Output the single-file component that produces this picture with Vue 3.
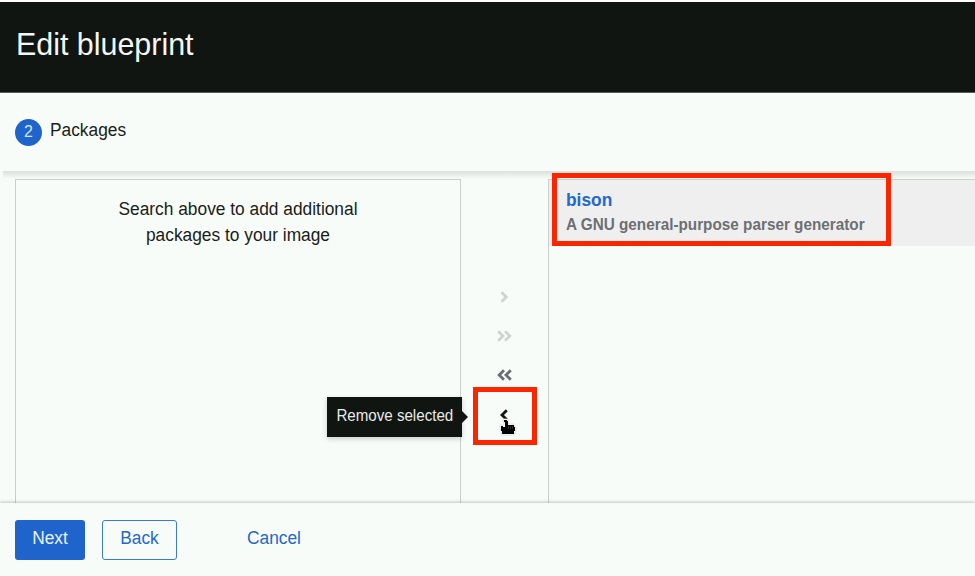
<script setup>
const idle = [
  { label: 'Add selected', paths: ['M2.5 1.3 L7.3 6 L2.5 10.7'], muted: true, w: 10 },
  { label: 'Add all', paths: ['M1.2 1.3 L6 6 L1.2 10.7', 'M8 1.3 L12.8 6 L8 10.7'], muted: true, w: 15 },
  { label: 'Remove all', paths: ['M7 1.3 L2.2 6 L7 10.7', 'M13.8 1.3 L9 6 L13.8 10.7'], muted: false, w: 15 },
]
</script>

<template>
  <div class="wizard">
    <header class="head"><h1 class="t from-left">Edit blueprint</h1></header>
    <nav class="step"><span class="num">2</span><span class="step-name t from-left">Packages</span></nav>
    <main class="body">
      <section class="pane available">
        <p class="t">Search above to add additional<br />packages to your image</p>
      </section>
      <div class="controls">
        <button v-for="c in idle" :key="c.label" class="ctl" :class="{ muted: c.muted }" :aria-label="c.label">
          <svg :width="c.w" height="12" :viewBox="`0 0 ${c.w} 12`"><path v-for="p in c.paths" :key="p" :d="p" /></svg>
        </button>
        <button class="ctl active" aria-label="Remove selected">
          <svg class="arrow" width="10" height="12" viewBox="0 0 10 12"><path d="M7.8 1.3 L3 6 L7.8 10.7" /></svg>
          <svg class="cursor" width="19" height="20" viewBox="0 0 19 20">
            <path class="halo" d="M5 2h5v5h6v3h2v5h-1v3H3v-5H2V8h4V5H5z" />
            <path class="hand" d="M6 3h3v1h1v4h6v2h1v4h-1v3H4v-3H3V9h2v1h2V5H6z" />
            <path class="detail" d="M10.5 9.5v2M12.5 9.5v2M14.5 9.5v2" />
          </svg>
        </button>
        <div class="tooltip"><div class="t">Remove selected</div></div>
      </div>
      <section class="pane chosen">
        <div class="item">
          <div class="item-name t from-left">bison</div>
          <div class="item-desc t from-left">A GNU general-purpose parser generator</div>
        </div>
      </section>
    </main>
    <footer class="foot">
      <button class="btn primary"><div class="t">Next</div></button>
      <button class="btn outline"><div class="t">Back</div></button>
      <button class="btn link"><div class="t">Cancel</div></button>
    </footer>
  </div>
</template>

<style>
body { margin: 0; overflow: hidden; background: #f8fcf9; }
</style>

<style scoped>
*, *::after { box-sizing: border-box; }
.wizard {
  display: flex;
  flex-direction: column;
  width: 975px;
  height: 576px;
  overflow: hidden;
  background: #f8fcf9;
  color: #1b1d1b;
  font-family: "Liberation Sans", Arial, sans-serif;
  font-size: 18.35px;
}
/* slightly condensed lettering */
.t { transform: scaleX(.945); white-space: nowrap; }
.from-left { transform-origin: left; }
button { font: inherit; padding: 0; margin: 0; border: 0; background: none; }
.head {
  flex: none;
  height: 93px;
  padding: 24px 15.5px 0;
  border-top: 2px solid #fff;
  border-bottom: 1px solid #59605b;
  background: #101511;
}
h1 { margin: 0; font-size: 32.2px; font-weight: 400; line-height: 36px; color: #f4f7f5; }
.step {
  flex: none;
  display: flex;
  align-items: center;
  height: 78px;
  padding: 0 15px;
}
.num {
  width: 27px;
  height: 27px;
  margin-right: 8px;
  border-radius: 50%;
  background: #1f64cb;
  color: #d3e6f8;
  font-size: 16px;
  line-height: 26px;
  text-align: center;
}
.step-name { padding-bottom: 4px; line-height: 24px; }
.body { position: relative; flex: 1; min-height: 0; display: flex; padding: 8px 0 0 15px; }
.body::before {
  content: "";
  position: absolute;
  inset: 0 0 auto 3px;
  height: 8px;
  background: linear-gradient(#dde1de, #e6eae7 35%, #f8fcf900);
}
.pane { border: 1px solid #cbcfcc; border-bottom: 0; }
.available { width: 446px; }
.available p { margin: 16px 0 0; line-height: 26px; text-align: center; }
.controls {
  position: relative;
  width: 87px;
  padding: 98px 0 0 0;
  display: flex;
  flex-direction: column;
  align-items: center;
}
.ctl { display: flex; align-items: center; justify-content: center; flex: none; width: 40px; height: 39.4px; margin-right: 1px; color: #6a6e73; }
.ctl.muted { color: #d0d3d1; }
.ctl path { fill: none; stroke: currentColor; stroke-width: 2.8; }
.ctl.active {
  position: relative;
  width: 64px;
  height: 58px;
  margin: -8px 0 0 1px;
  border: 5px solid #fb2600;
  color: #151515;
}
.arrow { margin: 0 2px 3px 0; }
.cursor { position: absolute; left: 20px; top: 25px; }
.ctl .cursor .halo { fill: #fff; stroke: #d5d8d6; stroke-width: .8; }
.ctl .cursor .hand { fill: #050505; stroke: none; }
.ctl .cursor .detail { stroke: #666; stroke-width: .6; }
.tooltip {
  position: absolute;
  right: 86px;
  top: 218px;
  width: 135px;
  height: 40px;
  background: #101511;
  color: #e8ebe9;
  font-size: 16px;
  line-height: 38px;
  display: flex;
  justify-content: center;
  box-shadow: 0 2px 5px rgba(0, 0, 0, .18);
}
.tooltip::after {
  content: "";
  position: absolute;
  left: 100%;
  top: 14px;
  border: solid transparent;
  border-width: 6.5px 0 6.5px 6px;
  border-left-color: #101511;
}
.chosen { flex: 1; border-right: 0; }
.item { position: relative; height: 66px; padding: 8px 0 0 17px; background: #f0efef; font-weight: 700; }
.item::after {
  content: "";
  position: absolute;
  left: 3px;
  top: -7px;
  width: 339px;
  height: 73px;
  border: 5px solid #fb2600;
}
.item-name { color: #2368cc; line-height: 24px; }
.item-desc { color: #6c7074; font-size: 16.2px; line-height: 25px; }
.foot {
  position: relative;
  flex: none;
  display: flex;
  height: 73px;
  padding: 17px 15px 0;
  background: #f8fcf9;
  box-shadow: 0 -1px 3px rgba(0, 0, 0, .22);
}
.btn { height: 40px; padding-bottom: 4px; border-radius: 3px; color: #2368cc; }
.primary { width: 70px; background: #1f64cb; color: #e8f2fc; }
.outline { width: 75px; margin-left: 17px; border: 1px solid #3b79d2; }
.link { width: 86px; margin-left: 54px; }
</style>
